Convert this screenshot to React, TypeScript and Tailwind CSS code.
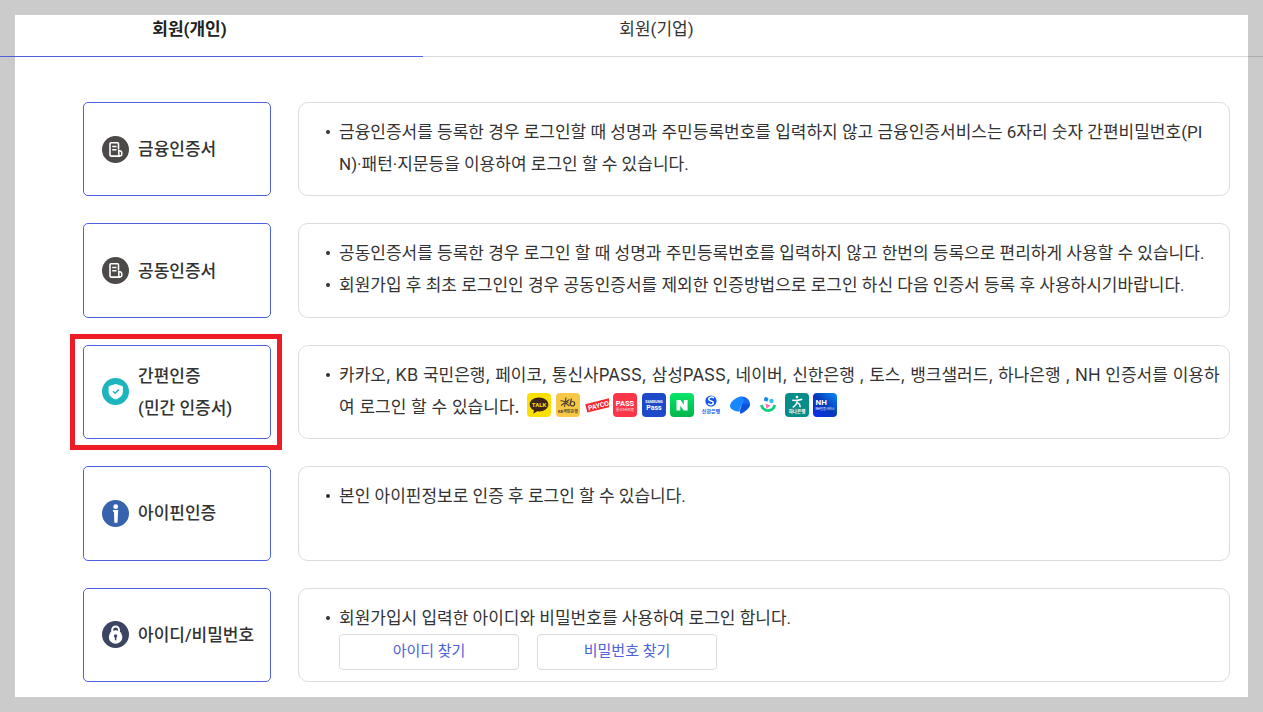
import React from 'react';

const TABS = ['회원(개인)', '회원(기업)'];

function CertIcon() {
  return (
    <svg viewBox="0 0 27 27" className="size-[27px] shrink-0" fill="none" aria-hidden="true">
      <circle cx="13.5" cy="13.5" r="13.5" fill="#4d4948" />
      <path d="M16.500 13.500V7.700a1 1 0 0 0-1-1H9a1 1 0 0 0-1 1v11.400a1 1 0 0 0 1 1h9" stroke="#fff" strokeWidth="1.6" />
      <path d="M10.200 10.400h4.300M10.200 13.700h4.300" stroke="#fff" strokeWidth="1.500" />
      <path d="M16.800 14.800h1a2 2 0 0 1 2 2v1.300a2 2 0 0 1-2 2h-1z" stroke="#fff" strokeWidth="1.500" />
    </svg>
  );
}

function ShieldIcon() {
  return (
    <svg viewBox="0 0 27 27" className="size-[27px] shrink-0" fill="none" aria-hidden="true">
      <circle cx="13.5" cy="13.5" r="13.5" fill="#1cb4bd" />
      <path d="M13.700 6.500l6.600 2v5.600c0 3.400-2.600 5.600-6.600 6.900-4-1.300-6.600-3.500-6.600-6.900V8.500z" fill="#fff" stroke="#fff" strokeLinejoin="round" />
      <path d="M11 13.200l2.100 2 3.600-3.600" stroke="#1cb4bd" strokeWidth="1.500" />
    </svg>
  );
}

function IpinIcon() {
  return (
    <svg viewBox="0 0 27 27" className="size-[27px] shrink-0" fill="none" aria-hidden="true">
      <circle cx="13.5" cy="13.5" r="13.5" fill="#3762ad" />
      <circle cx="13.700" cy="6.700" r="2.400" fill="#fff" />
      <path d="M11 10h5.200l-.700 12.700h-3.200l-.300-11h-1z" fill="#fff" />
    </svg>
  );
}

function LockIcon() {
  return (
    <svg viewBox="0 0 27 27" className="size-[27px] shrink-0" fill="none" aria-hidden="true">
      <circle cx="13.5" cy="13.5" r="13.5" fill="#3b4562" />
      <path d="M10.200 11V8.800a3.400 3.400 0 0 1 6.800 0V11" stroke="#fff" strokeWidth="2" />
      <circle cx="13.600" cy="16" r="6.800" fill="#fff" />
      <circle cx="13.600" cy="15" r="1.700" fill="#3b4562" />
      <path d="M13.600 15v4.300" stroke="#3b4562" strokeWidth="1.500" />
    </svg>
  );
}

function ProviderLogos() {
  const box = 'size-6 shrink-0';
  return (
    <span className="ml-2 inline-flex w-[310px] justify-between align-[-4px] font-['Roboto','Noto_Sans_CJK_KR',sans-serif]">
      <svg viewBox="0 0 24 24" className={box} role="img" aria-label="카카오">
        <rect width="24" height="24" rx="4" fill="#f9e000" />
        <path d="M12 4.500c-5.200 0-9.300 3.100-9.300 7 0 2.500 1.700 4.700 4.300 5.900l-.8 3.300 4-2.400c5.900.8 11.100-2.300 11.100-6.800 0-3.900-4.100-7-9.300-7z" fill="#3c2418" />
        <text x="12" y="13.800" fontSize="6" fontWeight="700" textAnchor="middle" fill="#f9e000">TALK</text>
      </svg>
      <svg viewBox="0 0 24 24" className={box} fill="none" role="img" aria-label="KB 국민은행">
        <rect width="24" height="24" rx="4" fill="#f7c846" />
        <path d="M10 4.500l-1.500 9.500M4.500 7.500l8 2M5 12.500l8.500-6M9 9.500l4.500 3.500M15.500 5.500l-1.500 6" stroke="#51442f" strokeWidth="1.200" />
        <circle cx="16.500" cy="10.700" r="2.200" stroke="#51442f" strokeWidth="1.200" />
        <text x="12" y="20" fontSize="4" fontWeight="700" textAnchor="middle" fill="#51442f">KB국민은행</text>
      </svg>
      <svg viewBox="0 0 24 24" className={box} role="img" aria-label="페이코">
        <g transform="rotate(-14 12 13)">
          <path d="M1 8.500H26v8.500H1z" fill="#f4292d" />
          <text x="13.500" y="15.300" fontSize="6.800" fontWeight="700" textAnchor="middle" fill="#fff">PAYCO</text>
        </g>
      </svg>
      <svg viewBox="0 0 24 24" className={box} role="img" aria-label="통신사PASS">
        <rect width="24" height="24" rx="4" fill="#fc3648" />
        <text x="12" y="12.500" fontSize="7.500" fontWeight="700" textAnchor="middle" fill="#fff">PASS</text>
        <text x="12" y="18" fontSize="3.500" textAnchor="middle" fill="#fff">통신3사인증</text>
      </svg>
      <svg viewBox="0 0 24 24" className={box} role="img" aria-label="삼성PASS">
        <rect width="24" height="24" rx="4" fill="#1e49c8" />
        <text x="12" y="9.500" fontSize="3.600" fontWeight="700" textAnchor="middle" fill="#fff">SAMSUNG</text>
        <text x="12" y="16.500" fontSize="7" fontWeight="700" textAnchor="middle" fill="#fff">Pass</text>
      </svg>
      <svg viewBox="0 0 24 24" className={box} role="img" aria-label="네이버">
        <defs>
          <linearGradient id="naver" x1="0" y1="0" x2="0" y2="1">
            <stop stopColor="#07e567" />
            <stop offset="1" stopColor="#02b54c" />
          </linearGradient>
        </defs>
        <rect width="24" height="24" rx="4" fill="url(#naver)" />
        <path d="M6.500 7h4l3.300 5V7h3.800v10.500h-3.900l-3.400-5v5H6.500z" fill="#fff" />
      </svg>
      <svg viewBox="0 0 24 24" className={box} fill="none" role="img" aria-label="신한은행">
        <circle cx="12" cy="8" r="5.600" fill="#1454e8" />
        <path d="M15 5c-2-1.700-5.500-.8-5.300 1.200.2 2.200 4.800 1.400 4.700 3.700-.1 2-3.300 2.400-5.300.6" stroke="#fff" strokeWidth="1.500" />
        <text x="12" y="19.800" fontSize="5" fontWeight="700" textAnchor="middle" fill="#1454e8">신한은행</text>
      </svg>
      <svg viewBox="0 0 24 24" className={box} role="img" aria-label="토스">
        <path d="M12.500 3.500C17.500 2.800 22 6.500 22 11c0 3.800-3.500 6-7.500 6.200z" fill="#1769f5" />
        <path d="M2 13C2 9 8 4 12.500 3.500c3.500 1.500 4 4 2.500 7-1.500 3-4 4.500-3 8C7 18.500 2 16.500 2 13z" fill="#1786ff" />
        <path d="M22 11c0 3.800-4.500 7.500-9.500 10-1.500-4 .5-7.500 2.500-10.500z" fill="#0b52de" />
      </svg>
      <svg viewBox="0 0 24 24" className={box} fill="none" role="img" aria-label="뱅크샐러드">
        <path d="M5.500 12a6.700 6.700 0 0 0 13.200 0" stroke="#10cf80" strokeWidth="3" />
        <rect x="8.200" y="4.200" width="4" height="4" rx="1" transform="rotate(20 10 6)" fill="#188ce8" />
        <circle cx="15.500" cy="8" r="2.200" fill="#32bff4" />
        <path d="M9.500 10.500l5.300 2.300-4.500 2.600z" fill="#ff70ac" />
      </svg>
      <svg viewBox="0 0 24 24" className={box} fill="none" role="img" aria-label="하나은행">
        <rect width="24" height="24" rx="4" fill="#078d89" />
        <circle cx="12" cy="4" r="1.300" fill="#fff" />
        <path d="M7.200 7.300c4 .4 7 .1 10-1M12.300 7.200c-.2 3-1.700 5.500-4.600 7.200M11.500 9.500c2.200.5 3.600 2 3.700 4.700" stroke="#fff" strokeWidth="1.500" />
        <text x="12" y="20" fontSize="4.500" fontWeight="700" textAnchor="middle" fill="#fff">하나은행</text>
      </svg>
      <svg viewBox="0 0 24 24" className={box} role="img" aria-label="NH">
        <defs>
          <linearGradient id="nh" x1="0" y1="1" x2="1" y2="0">
            <stop stopColor="#0a2df0" />
            <stop offset=".5" stopColor="#0739b8" />
            <stop offset="1" stopColor="#078bfa" />
          </linearGradient>
        </defs>
        <rect width="24" height="24" rx="4" fill="url(#nh)" />
        <text x="2.500" y="11.800" fontSize="8" fontWeight="700" fill="#fff">NH</text>
        <text x="2.500" y="16.800" fontSize="3.200" fill="#fff">NH인증서비스</text>
      </svg>
    </span>
  );
}

interface MethodProps {
  icon: React.ReactNode;
  label: React.ReactNode;
  items: React.ReactNode[];
  highlighted?: boolean;
  children?: React.ReactNode;
}

function Method({ icon, label, items, highlighted, children }: MethodProps) {
  return (
    <section className="flex gap-[27px]">
      <div className="relative flex w-[188px] shrink-0">
        <button type="button" className="flex flex-1 items-center gap-[9px] rounded-[5px] border border-[#4b61dd] pl-[18px] text-left leading-8 font-medium">
          {icon}
          <span>{label}</span>
        </button>
        {highlighted && <div className="pointer-events-none absolute -inset-[11px] -left-[13px] border-[5px] border-[#ee1c25]" />}
      </div>
      <div className={`min-w-0 flex-1 rounded-[10px] border border-[#dcdcdc] pt-[13px] pb-2 pl-[27px] ${highlighted ? 'pr-2' : 'pr-4'}`}>
        <ul>
          {items.map((item, i) => (
            <li key={i} className="flex gap-[9px] leading-8 break-all">
              <span className="mt-[14px] size-1 shrink-0 rounded-full bg-[#333]" />
              <p>{item}</p>
            </li>
          ))}
        </ul>
        {children}
      </div>
    </section>
  );
}

export default function App() {
  const findButton = 'h-9 w-[180px] rounded-[4px] border border-[#dcdcdc] text-[15px] text-[#4b61dd]';
  return (
    <div className="flex min-h-screen flex-col bg-[#cbcbcb] p-[15px] font-['Roboto','Noto_Sans_CJK_KR',sans-serif] text-[17px] text-[#333]">
      <main className="flex flex-1 flex-col bg-white">
        <nav className="-mx-[15px] overflow-hidden">
          <div className="-mr-[94px] -ml-[44px] grid grid-cols-3">
            {TABS.map((tab, i) => (
              <button
                key={tab}
                type="button"
                className={i === 0 ? 'h-[42px] border-b border-[#4b61dd] pb-3 font-bold text-[#222]' : 'h-[42px] border-b border-black/15 pb-3'}
              >
                {tab}
              </button>
            ))}
            <span className="border-b border-black/15" />
          </div>
        </nav>

        <div className="grid flex-1 auto-rows-fr gap-[27px] pt-[45px] pr-[18px] pb-[15px] pl-[68px]">
          <Method
            icon={<CertIcon />}
            label="금융인증서"
            items={['금융인증서를 등록한 경우 로그인할 때 성명과 주민등록번호를 입력하지 않고 금융인증서비스는 6자리 숫자 간편비밀번호(PIN)·패턴·지문등을 이용하여 로그인 할 수 있습니다.']}
          />
          <Method
            icon={<CertIcon />}
            label="공동인증서"
            items={[
              '공동인증서를 등록한 경우 로그인 할 때 성명과 주민등록번호를 입력하지 않고 한번의 등록으로 편리하게 사용할 수 있습니다.',
              '회원가입 후 최초 로그인인 경우 공동인증서를 제외한 인증방법으로 로그인 하신 다음 인증서 등록 후 사용하시기바랍니다.',
            ]}
          />
          <Method
            highlighted
            icon={<ShieldIcon />}
            label={<>간편인증<br />(민간 인증서)</>}
            items={[
              <span className="font-['Inter','Noto_Sans_CJK_KR',sans-serif]">
                카카오, KB 국민은행, 페이코, 통신사PASS, 삼성PASS, 네이버, 신한은행 , 토스, 뱅크샐러드, 하나은행 , NH 인증서를 이용하<br />
                여 로그인 할 수 있습니다.
                <ProviderLogos />
              </span>,
            ]}
          />
          <Method icon={<IpinIcon />} label="아이핀인증" items={['본인 아이핀정보로 인증 후 로그인 할 수 있습니다.']} />
          <Method icon={<LockIcon />} label="아이디/비밀번호" items={['회원가입시 입력한 아이디와 비밀번호를 사용하여 로그인 합니다.']}>
            <div className="ml-[13px] flex gap-[18px]">
              <button type="button" className={findButton}>아이디 찾기</button>
              <button type="button" className={findButton}>비밀번호 찾기</button>
            </div>
          </Method>
        </div>
      </main>
    </div>
  );
}
